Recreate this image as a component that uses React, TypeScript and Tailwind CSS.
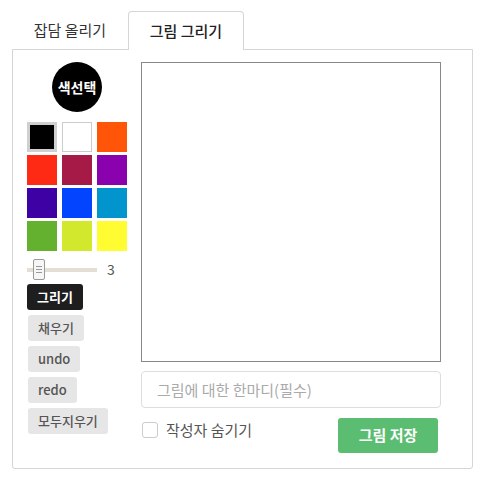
const font = { fontFamily: '"Noto Sans CJK KR", "Noto Sans", sans-serif' };

const colors = [
  "#000000",
  "#ffffff",
  "#ff5509",
  "#ff2a14",
  "#a61a48",
  "#8a02ad",
  "#3e02a4",
  "#0344ff",
  "#0294cc",
  "#64b02f",
  "#d2e82c",
  "#fffd32",
];

const tools = ["채우기", "undo", "redo", "모두지우기"];

export default function App() {
  return (
    <div className="min-h-[482px] w-[482px] bg-white pt-[11px] pl-[12px]" style={font}>
      {/* Tabs */}
      <div className="flex w-[461px]">
        <div className="flex h-[38px] w-[116px] items-center justify-center text-[15px] text-[#333]">
          잡담 올리기
        </div>
        <div className="relative z-10 -mb-px flex h-[39px] w-[116px] items-center justify-center rounded-t-[4px] border border-b-0 border-[#d5d5d5] bg-white text-[15px] font-medium text-[#222]">
          그림 그리기
        </div>
      </div>

      {/* Panel */}
      <div className="flex h-[420px] w-[461px] gap-[14px] rounded-b-[3px] border border-[#d5d5d5] pt-[12px] pl-[14px]">
        <div className="flex w-[100px] flex-col">
          <div className="flex justify-center">
            <div className="flex h-[50px] w-[50px] items-center justify-center rounded-full bg-black text-[14px] font-semibold text-white">
              색선택
            </div>
          </div>

          <div className="mt-[10px] grid grid-cols-3 gap-x-[5px] gap-y-[3px]">
            {colors.map((c, i) => (
              <div
                key={c}
                className={
                  i === 0
                    ? "h-[30px] w-[30px] border-[3px] border-[#cfcfcf]"
                    : i === 1
                      ? "h-[30px] w-[30px] border border-[#cccccc]"
                      : "h-[30px] w-[30px]"
                }
                style={{ backgroundColor: c }}
              />
            ))}
          </div>

          <div className="mt-[8px] flex h-[21px] items-center gap-[10px]">
            <div className="relative h-[4px] w-[70px] bg-[#e3ded6]">
              <div className="absolute top-[-9px] left-[6px] flex h-[21px] w-[12px] flex-col items-center justify-center gap-[2px] rounded-[2px] border border-[#999] bg-[#f6f6f6]">
                <span className="h-px w-[6px] bg-[#999]" />
                <span className="h-px w-[6px] bg-[#999]" />
                <span className="h-px w-[6px] bg-[#999]" />
              </div>
            </div>
            <span className="text-[14px] text-[#555]">3</span>
          </div>

          <div className="mt-[4px] flex flex-col items-start gap-[5px]">
            <button className="h-[26px] rounded-[3px] bg-[#1e1e1e] px-[10px] text-[13px] font-semibold text-white">
              그리기
            </button>
            {tools.map((t) => (
              <button
                key={t}
                className="ml-px h-[26px] rounded-[3px] bg-[#e6e6e6] px-[10px] text-[13px] font-medium text-[#555]"
              >
                {t}
              </button>
            ))}
          </div>
        </div>

        <div className="flex w-[300px] flex-col">
          <div className="h-[300px] w-[300px] border border-[#888] bg-white" />
          <input
            placeholder="그림에 대한 한마디(필수)"
            className="mt-[9px] h-[37px] w-[300px] rounded-[4px] border border-[#ddd] px-[15px] text-[15px] outline-none placeholder:text-[#aaa]"
            style={font}
          />
          <div className="mt-[10px] flex items-start justify-between pr-[3px]">
            <label className="flex h-[24px] items-center gap-[8px] text-[15px] text-[#555]">
              <span className="ml-px h-[16px] w-[16px] rounded-[3px] border border-[#ccc] bg-white" />
              작성자 숨기기
            </label>
            <button className="h-[35px] w-[100px] rounded-[3px] bg-[#5bbd72] text-[15px] font-semibold text-white">
              그림 저장
            </button>
          </div>
        </div>
      </div>
    </div>
  );
}
